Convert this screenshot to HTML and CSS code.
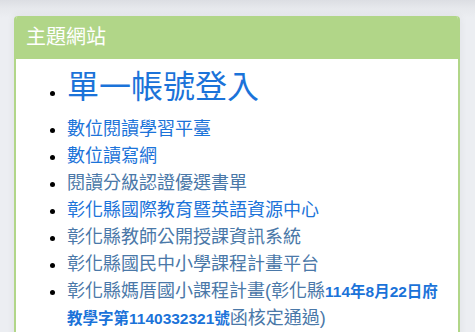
FILE: index.html
```html
<!DOCTYPE html>
<html lang="zh-Hant">
<head>
<meta charset="utf-8">
<link rel="stylesheet" href="styles.css">
</head>
<body>
<div class="page">
  <section class="card">
    <header class="card-head">主題網站</header>
    <div class="card-body">
      <ul class="links">
        <li class="big"><a class="blue big-link" href="#">單一帳號登入</a></li>
        <li><a class="blue" href="#">數位閱讀學習平臺</a></li>
        <li><a class="blue" href="#">數位讀寫網</a></li>
        <li><a class="gray" href="#">閱讀分級認證優選書單</a></li>
        <li><a class="blue" href="#">彰化縣國際教育暨英語資源中心</a></li>
        <li><a class="gray" href="#">彰化縣教師公開授課資訊系統</a></li>
        <li><a class="gray" href="#">彰化縣國民中小學課程計畫平台</a></li>
        <li><a class="gray" href="#">彰化縣媽厝國小課程計畫(彰化縣</a><b class="strong">114年8月22日府教學字第1140332321號</b><a class="gray" href="#">函核定通過)</a></li>
      </ul>
    </div>
  </section>
</div>
</body>
</html>
```

FILE: styles.css
```css
html, body {
  margin: 0;
  padding: 0;
}
body {
  width: 475px;
  height: 332px;
  overflow: hidden;
  background: linear-gradient(to bottom, #dcdee3 0px, #e6e8ec 8px, #eceef2 18px, #eceef2 100%);
  font-family: "Liberation Sans", "Noto Sans CJK TC", sans-serif;
}
.page {
  padding: 16px 15px 0 14px;
}
.card {
  background: #ffffff;
  border-radius: 4px;
  border: 2px solid #b1d688;
  border-top: 0;
  box-shadow: 0 0 8px rgba(0, 0, 0, 0.06);
  overflow: hidden;
}
.card-head {
  background: #b1d688;
  color: #ffffff;
  font-size: 20px;
  line-height: 27px;
  padding: 8px 10px 8px 10px;
}
.card-body {
  padding: 4px 9px 10px 9px;
}
.links {
  margin: 0;
  padding-left: 42px;
  font-size: 18px;
  line-height: 27px;
}
.links li {
  margin: 0;
}
.links li.big {
  line-height: 48px;
}
.big-link {
  font-size: 32px;
  line-height: 48px;
}
.links a {
  text-decoration: none;
}
.blue {
  color: #1b73d9;
}
.gray {
  color: #4a78a8;
}
.strong {
  color: #1b73d9;
  font-weight: bold;
  font-size: 15.5px;
  line-height: 18px;
}
```
